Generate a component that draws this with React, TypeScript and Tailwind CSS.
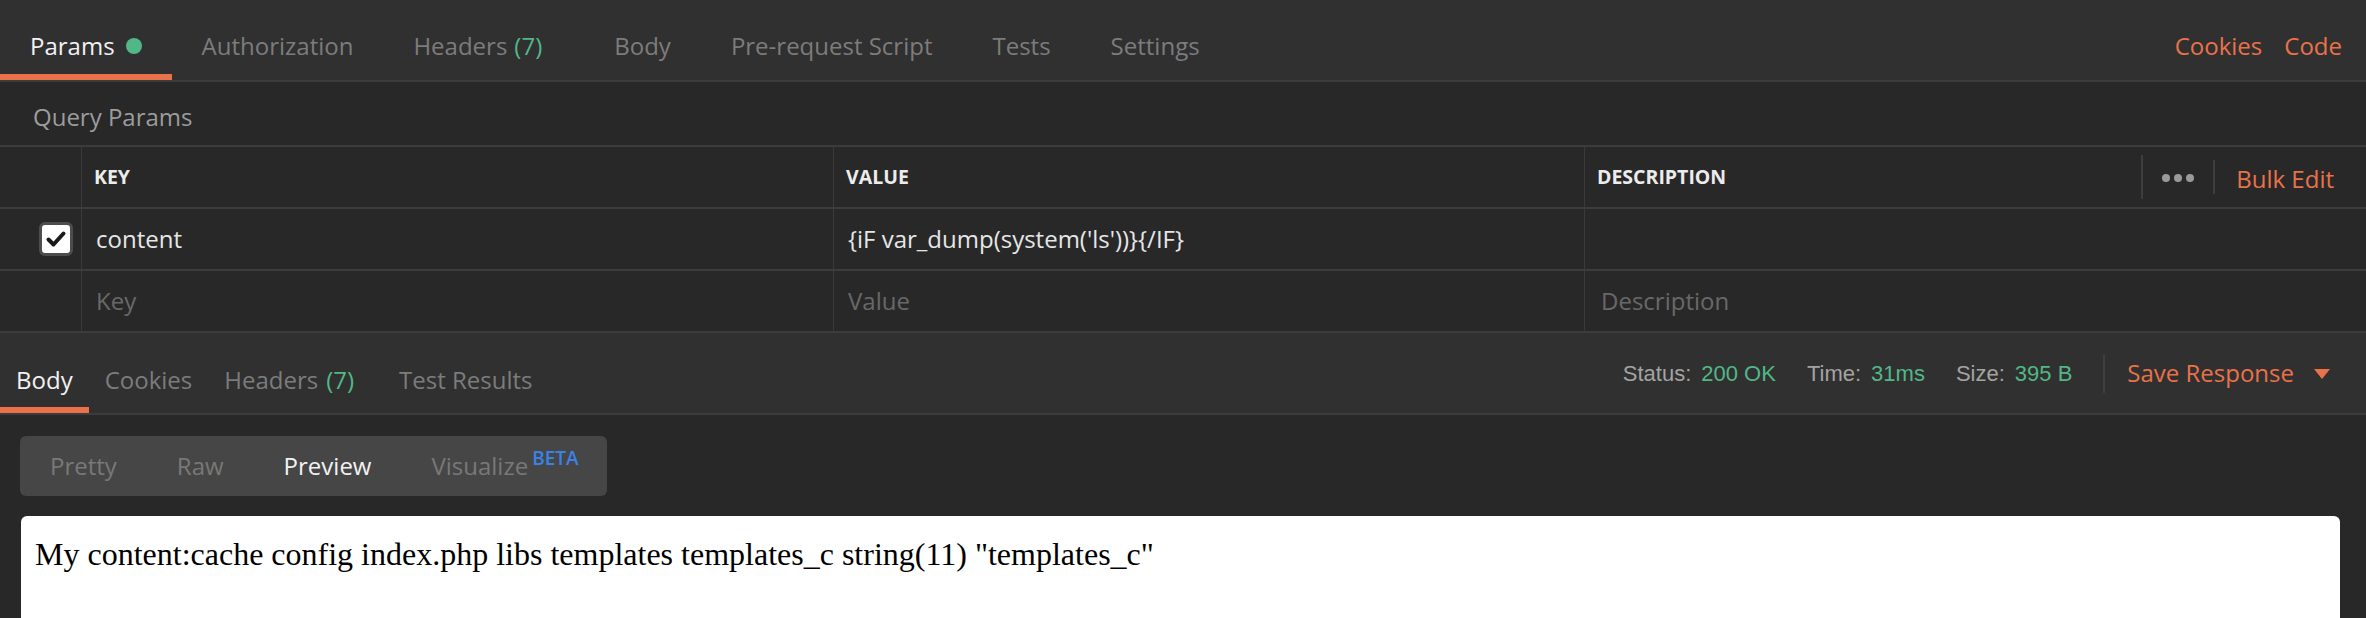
import React from "react"

const ORANGE = "text-[#e9724a]"

function TopTabs() {
  return (
    <div className="flex h-[82px] items-stretch border-b-2 border-[#3c3c3c] bg-[#303030] text-[24px]">
      <div className="relative flex items-center pl-[30px] pr-[30px] pt-3 text-[#f2f2f2]">
        Params
        <span className="ml-[11px] h-4 w-4 rounded-full bg-[#52b787]" />
        <div className="absolute bottom-0 left-0 right-0 h-[6px] bg-[#e9724a]" />
      </div>
      <div className="flex items-center px-[30px] pt-3 text-[#7c7c7c]">Authorization</div>
      <div className="flex items-center pl-[30px] pr-[42px] pt-3 text-[#7c7c7c]">
        Headers<span className="ml-[7px] text-[#52b787]">(7)</span>
      </div>
      <div className="flex items-center px-[30px] pt-3 text-[#7c7c7c]">Body</div>
      <div className="flex items-center px-[30px] pt-3 text-[#7c7c7c]">Pre-request Script</div>
      <div className="flex items-center px-[30px] pt-3 text-[#7c7c7c]">Tests</div>
      <div className="flex items-center px-[30px] pt-3 text-[#7c7c7c]">Settings</div>
      <div className={`ml-auto flex items-center gap-[22px] pr-[24px] pt-3 ${ORANGE}`}>
        <span>Cookies</span>
        <span>Code</span>
      </div>
    </div>
  )
}

function Check() {
  return (
    <div className="flex h-[34px] w-[34px] items-center justify-center rounded-[6px] border-[3px] border-[#4d4d4d] bg-white">
      <svg width="22" height="22" viewBox="0 0 22 22">
        <polyline points="3.5,11.5 8.5,16.5 18.5,5.5" fill="none" stroke="#1a1a1a" strokeWidth="4" strokeLinecap="round" strokeLinejoin="round" />
      </svg>
    </div>
  )
}

function ParamsTable() {
  const cols = "grid grid-cols-[81px_752px_751px_1fr]"
  const cell = "flex items-center border-l border-[#3a3a3a]"
  return (
    <div className="text-[24px]">
      <div className={`${cols} h-[62px] border-b-2 border-[#3c3c3c] text-[19.5px] font-bold text-[#ececec]`}>
        <div />
        <div className={`${cell} pl-3`}>KEY</div>
        <div className={`${cell} pl-3`}>VALUE</div>
        <div className={`${cell} justify-between pl-3`}>
          <span>DESCRIPTION</span>
          <div className="flex items-center pr-[32px] text-[24px] font-normal">
            <div className="h-[44px] w-[2px] bg-[#3e3e3e]" />
            <div className="mx-[19px] flex gap-[4px] pt-[2px]">
              <span className="h-[8px] w-[8px] rounded-full bg-[#9a9a9a]" />
              <span className="h-[8px] w-[8px] rounded-full bg-[#9a9a9a]" />
              <span className="h-[8px] w-[8px] rounded-full bg-[#9a9a9a]" />
            </div>
            <div className="h-[34px] w-[2px] bg-[#3e3e3e]" />
            <span className={`ml-[21px] pt-[4px] ${ORANGE}`}>Bulk Edit</span>
          </div>
        </div>
      </div>
      <div className={`${cols} h-[62px] border-b-2 border-[#3c3c3c] text-[#e6e6e6]`}>
        <div className="flex items-center justify-end pr-[8px]">
          <Check />
        </div>
        <div className={`${cell} pl-[14px]`}>content</div>
        <div className={`${cell} pl-[14px]`}>{"{iF var_dump(system('ls'))}{/IF}"}</div>
        <div className={cell} />
      </div>
      <div className={`${cols} h-[62px] border-b-2 border-[#3c3c3c] text-[#686868]`}>
        <div />
        <div className={`${cell} pl-[14px]`}>Key</div>
        <div className={`${cell} pl-[14px]`}>Value</div>
        <div className={`${cell} pl-[16px]`}>Description</div>
      </div>
    </div>
  )
}

function ResponseBar() {
  const label = "text-[#a3a3a3]"
  const val = "ml-[10px] text-[#52b787]"
  return (
    <div className="flex h-[82px] items-stretch border-b-2 border-[#3c3c3c] bg-[#303030] text-[24px]">
      <div className="relative flex items-center px-4 pt-[14px] text-[#f2f2f2]">
        Body
        <div className="absolute bottom-0 left-0 right-0 h-[6px] bg-[#e9724a]" />
      </div>
      <div className="flex items-center px-4 pt-[14px] text-[#7c7c7c]">Cookies</div>
      <div className="flex items-center pl-4 pr-[29px] pt-[14px] text-[#7c7c7c]">
        Headers<span className="ml-[8px] text-[#52b787]">(7)</span>
      </div>
      <div className="flex items-center px-4 pt-[14px] text-[#7c7c7c]">Test Results</div>
      <div className="ml-auto flex items-center pr-[36px]">
        <div className="flex items-center font-['Liberation_Sans',Arial,sans-serif] text-[22px]">
          <span className={label}>Status:</span>
          <span className={val}>200 OK</span>
          <span className={`ml-[31px] ${label}`}>Time:</span>
          <span className={val}>31ms</span>
          <span className={`ml-[31px] ${label}`}>Size:</span>
          <span className={val}>395 B</span>
        </div>
        <div className="ml-[31px] h-[39px] w-[2px] bg-[#3e3e3e]" />
        <span className={`ml-[22px] ${ORANGE}`}>Save Response</span>
        <svg className="ml-[20px] mt-[2px]" width="16" height="10" viewBox="0 0 16 10">
          <polygon points="0,0 16,0 8,10" fill="#e9724a" />
        </svg>
      </div>
    </div>
  )
}

function PreviewToolbar() {
  return (
    <div className="ml-5 mt-[21px] flex h-[60px] w-[587px] items-center rounded-[6px] bg-[#464646] text-[24px]">
      <div className="px-[30px] text-[#787878]">Pretty</div>
      <div className="px-[30px] text-[#787878]">Raw</div>
      <div className="px-[30px] text-[#f2f2f2]">Preview</div>
      <div className="flex items-center pl-[30px] text-[#787878]">
        Visualize
        <span className="relative -top-[8px] ml-[4px] text-[19px] font-semibold text-[#3b82e6]">BETA</span>
      </div>
    </div>
  )
}

export default function App() {
  return (
    <div className="flex h-[618px] w-full flex-col overflow-hidden bg-[#282828] font-['Open_Sans',sans-serif]">
      <TopTabs />
      <div className="flex h-[65px] items-center border-b-2 border-[#3c3c3c] pl-[33px] pt-[6px] text-[24px] text-[#9c9c9c]">
        Query Params
      </div>
      <ParamsTable />
      <ResponseBar />
      <PreviewToolbar />
      <div className="ml-[21px] mr-[26px] mt-[20px] flex-1 rounded-t-[6px] bg-white pl-[14px] pt-[14px] font-['Liberation_Serif','Times_New_Roman',serif] text-[32px] text-black">
        My content:cache config index.php libs templates templates_c string(11) "templates_c"
      </div>
    </div>
  )
}
